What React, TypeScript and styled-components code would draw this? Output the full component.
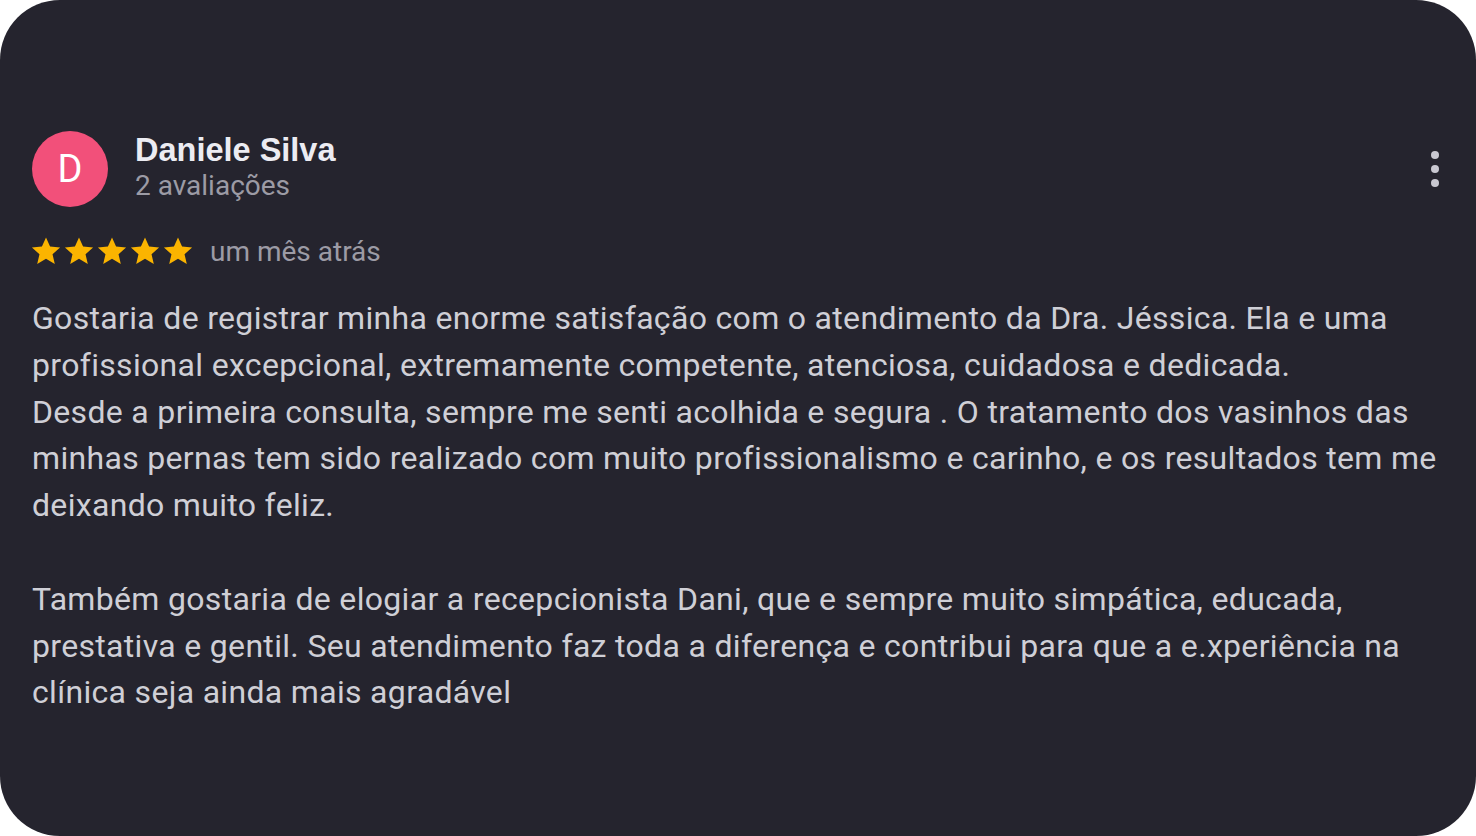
import styled, { createGlobalStyle } from "styled-components";

const GlobalStyle = createGlobalStyle`
  html, body {
    margin: 0;
    padding: 0;
    background: #ffffff;
  }
  body {
    font-family: Roboto, "Noto Sans", sans-serif;
  }
`;

const Card = styled.div`
  width: 1476px;
  height: 836px;
  box-sizing: border-box;
  background: #25242e;
  border-radius: 60px;
  padding: 131px 32px 0 32px;
  overflow: hidden;
`;

const Header = styled.div`
  display: flex;
  align-items: center;
  height: 76px;
`;

const Avatar = styled.div`
  width: 76px;
  height: 76px;
  border-radius: 50%;
  background: #f2507a;
  color: #ffffff;
  display: flex;
  align-items: center;
  justify-content: center;
  font-size: 38px;
  flex-shrink: 0;
`;

const Who = styled.div`
  margin-left: 27px;
  display: flex;
  flex-direction: column;
  flex: 1;
  margin-top: -3px;
`;

const Name = styled.div`
  font-family: "Liberation Sans", Arial, sans-serif;
  font-weight: bold;
  font-size: 32.5px;
  line-height: 36px;
  color: #ececf2;
`;

const Sub = styled.div`
  font-size: 28px;
  line-height: 36px;
  color: #9c9ba5;
`;

const More = styled.button`
  background: none;
  border: none;
  padding: 0;
  width: 16px;
  display: flex;
  flex-direction: column;
  align-items: center;
  gap: 6px;
  margin-right: 1px;
  span {
    width: 8px;
    height: 8px;
    border-radius: 50%;
    background: #c9c8d1;
  }
`;

const Meta = styled.div`
  display: flex;
  align-items: center;
  margin-top: 26px;
  height: 36px;
`;

const Stars = styled.div`
  display: flex;
  gap: 1px;
  margin-left: -2px;
`;

const Ago = styled.span`
  margin-left: 16px;
  font-size: 28px;
  color: #9c9ba5;
`;

const Body = styled.p`
  margin: 26px 0 0 0;
  font-size: 32px;
  letter-spacing: 0.32px;
  line-height: 46.8px;
  color: #cfcfd6;
  white-space: pre-line;
  width: 1440px;
`;

const Star = () => (
  <svg width="32" height="32" viewBox="0 0 24 24">
    <path
      fill="#fbb400"
      d="M12 1.8l3.05 6.9 7.5.7-5.65 4.95 1.7 7.35L12 17.85 5.4 21.7l1.7-7.35L1.45 9.4l7.5-.7z"
    />
  </svg>
);

const text = `Gostaria de registrar minha enorme satisfação com o atendimento da Dra. Jéssica. Ela e uma
profissional excepcional, extremamente competente, atenciosa, cuidadosa e dedicada.
Desde a primeira consulta, sempre me senti acolhida e segura . O tratamento dos vasinhos das
minhas pernas tem sido realizado com muito profissionalismo e carinho, e os resultados tem me
deixando muito feliz.

Também gostaria de elogiar a recepcionista Dani, que e sempre muito simpática, educada,
prestativa e gentil. Seu atendimento faz toda a diferença e contribui para que a e.xperiência na
clínica seja ainda mais agradável`;

const App = () => {
  return (
    <>
      <GlobalStyle />
      <Card>
        <Header>
          <Avatar>D</Avatar>
          <Who>
            <Name>Daniele Silva</Name>
            <Sub>2 avaliações</Sub>
          </Who>
          <More aria-label="Mais opções">
            <span />
            <span />
            <span />
          </More>
        </Header>
        <Meta>
          <Stars>
            {[0, 1, 2, 3, 4].map((i) => (
              <Star key={i} />
            ))}
          </Stars>
          <Ago>um mês atrás</Ago>
        </Meta>
        <Body>{text}</Body>
      </Card>
    </>
  );
};

export default App;
